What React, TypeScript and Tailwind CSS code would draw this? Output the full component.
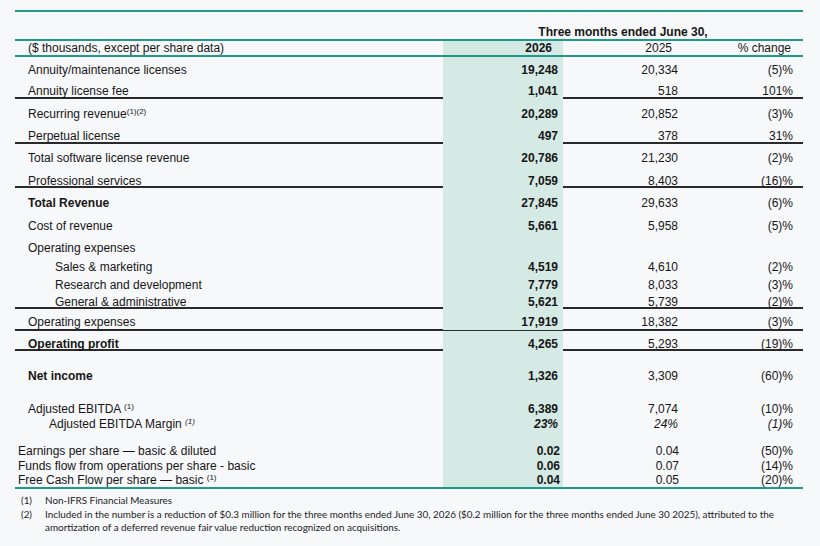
import React from 'react';

type Row = {
  label: React.ReactNode;
  a: string;
  b: string;
  c: string;
  row: string;
  pad: string;
  indent?: string;
  bold?: boolean;
  italic?: boolean;
};

const Sup = ({ children, italic }: { children: React.ReactNode; italic?: boolean }) => (
  <sup className={`text-[8px] ${italic ? 'italic' : ''}`}>{children}</sup>
);

const rows: Row[] = [
  { label: 'Annuity/maintenance licenses', a: '19,248', b: '20,334', c: '(5)%', row: 'h-[24px]', pad: 'pt-[5px]' },
  { label: 'Annuity license fee', a: '1,041', b: '518', c: '101%', row: 'h-[18px] border-b-2 border-[#2a2a2a]', pad: 'pt-[2px]' },
  {
    label: (
      <>
        Recurring revenue<Sup>(1)(2)</Sup>
      </>
    ),
    a: '20,289', b: '20,852', c: '(3)%', row: 'h-[26px]', pad: 'pt-[7px]',
  },
  { label: 'Perpetual license', a: '497', b: '378', c: '31%', row: 'h-[19px] border-b-2 border-[#2a2a2a]', pad: 'pt-[3px]' },
  { label: 'Total software license revenue', a: '20,786', b: '21,230', c: '(2)%', row: 'h-[27px]', pad: 'pt-[6px]' },
  { label: 'Professional services', a: '7,059', b: '8,403', c: '(16)%', row: 'h-[17px] border-b-2 border-[#2a2a2a]', pad: 'pt-[2px]' },
  { label: 'Total Revenue', bold: true, a: '27,845', b: '29,633', c: '(6)%', row: 'h-[27px]', pad: 'pt-[7px]' },
  { label: 'Cost of revenue', a: '5,661', b: '5,958', c: '(5)%', row: 'h-[22px]', pad: 'pt-[3px]' },
  { label: 'Operating expenses', a: '', b: '', c: '', row: 'h-[21px]', pad: 'pt-[3px]' },
  { label: 'Sales & marketing', indent: 'pl-[40px]', a: '4,519', b: '4,610', c: '(2)%', row: 'h-[18px]', pad: 'pt-[1px]' },
  { label: 'Research and development', indent: 'pl-[40px]', a: '7,779', b: '8,033', c: '(3)%', row: 'h-[18px]', pad: 'pt-[1px]' },
  { label: 'General & administrative', indent: 'pl-[40px]', a: '5,621', b: '5,739', c: '(2)%', row: 'h-[15px] border-b-2 border-[#2a2a2a]', pad: 'pt-0' },
  { label: 'Operating expenses', a: '17,919', b: '18,382', c: '(3)%', row: 'h-[22px] border-b-2 border-[#2a2a2a]', pad: 'pt-[5px]' },
  { label: 'Operating profit', bold: true, a: '4,265', b: '5,293', c: '(19)%', row: 'h-[20px] border-b-2 border-[#2a2a2a]', pad: 'pt-[5px]' },
  { label: 'Net income', bold: true, a: '1,326', b: '3,309', c: '(60)%', row: 'h-[42px]', pad: 'pt-[17px]' },
  {
    label: (
      <>
        Adjusted EBITDA <Sup>(1)</Sup>
      </>
    ),
    a: '6,389', b: '7,074', c: '(10)%', row: 'h-[23px]', pad: 'pt-[8px]',
  },
  {
    label: (
      <>
        Adjusted EBITDA Margin <Sup italic>(1)</Sup>
      </>
    ),
    indent: 'pl-[34px]', italic: true, a: '23%', b: '24%', c: '(1)%', row: 'h-[20px]', pad: 'pt-0',
  },
];

const perShare = [
  { label: <>Earnings per share — basic &amp; diluted</>, a: '0.02', b: '0.04', c: '(50)%', row: 'h-[23px]', pad: 'pt-[8px]' },
  { label: <>Funds flow from operations per share - basic</>, a: '0.06', b: '0.07', c: '(14)%', row: 'h-[14px]', pad: 'pt-0' },
  {
    label: (
      <>
        Free Cash Flow per share — basic <Sup>(1)</Sup>
      </>
    ),
    a: '0.04', b: '0.05', c: '(20)%', row: 'h-[16px] border-b-2 border-[#1f9a8d]', pad: 'pt-0',
  },
];

export default function App() {
  return (
    <div className="min-h-[546px] w-[820px] bg-[#f7f8fa] pt-[10px] text-[12px] text-[#161616] font-['Liberation_Sans',Arial,sans-serif]">
      <div className="ml-[15px] w-[788px] border-t-2 border-[#1f9a8d]">
        {/* period header */}
        <div className="grid h-[29px] grid-cols-[428px_360px] border-b-2 border-[#1f9a8d]">
          <div />
          <div className="pt-[12px] text-center font-bold leading-[16px]">Three months ended June 30,</div>
        </div>
        <div className="grid h-[16px] grid-cols-[428px_120px_120px_120px] border-b-2 border-[#1f9a8d] leading-[14px]">
          <div className="pl-[13px]">($ thousands, except per share data)</div>
          <div className="bg-[#d5e9e5] pr-[11px] text-right font-bold">2026</div>
          <div className="pr-[11px] text-right">2025</div>
          <div className="pr-[12px] text-right">% change</div>
        </div>

        {rows.map((r, i) => (
          <div key={i} className={`grid grid-cols-[428px_120px_120px_120px] leading-[16px] ${r.row}`}>
            <div className={`${r.pad} ${r.indent ?? 'pl-[13px]'} ${r.bold ? 'font-bold' : ''}`}>{r.label}</div>
            <div className={`${r.pad} bg-[#d5e9e5] pr-[5px] text-right font-bold ${r.italic ? 'italic' : ''}`}>{r.a}</div>
            <div className={`${r.pad} pr-[5px] text-right ${r.italic ? 'italic' : ''}`}>{r.b}</div>
            <div className={`${r.pad} pr-[10px] text-right ${r.italic ? 'italic' : ''}`}>{r.c}</div>
          </div>
        ))}

        {perShare.map((r, i) => (
          <div key={i} className={`grid grid-cols-[428px_120px_120px_120px] leading-[14px] ${r.row}`}>
            <div className={`${r.pad} pl-[3px]`}>{r.label}</div>
            <div className={`${r.pad} bg-[#d5e9e5] pr-[3px] text-right font-bold`}>{r.a}</div>
            <div className={`${r.pad} pr-[4px] text-right`}>{r.b}</div>
            <div className={`${r.pad} pr-[10px] text-right`}>{r.c}</div>
          </div>
        ))}

        {/* footnotes */}
        <div className="pt-[5px] font-['Lato',sans-serif] text-[9.9px] leading-[13.5px] text-[#1c1c1c]">
          <div className="flex">
            <span className="w-[30px] shrink-0 pl-[6px]">(1)</span>
            <span>Non-IFRS Financial Measures</span>
          </div>
          <div className="flex">
            <span className="w-[30px] shrink-0 pl-[6px]">(2)</span>
            <span className="w-[740px]">
              Included in the number is a reduction of $0.3 million for the three months ended June 30, 2026 ($0.2 million for
              the three months ended June 30 2025), attributed to the amortization of a deferred revenue fair value reduction
              recognized on acquisitions.
            </span>
          </div>
        </div>
      </div>
    </div>
  );
}
